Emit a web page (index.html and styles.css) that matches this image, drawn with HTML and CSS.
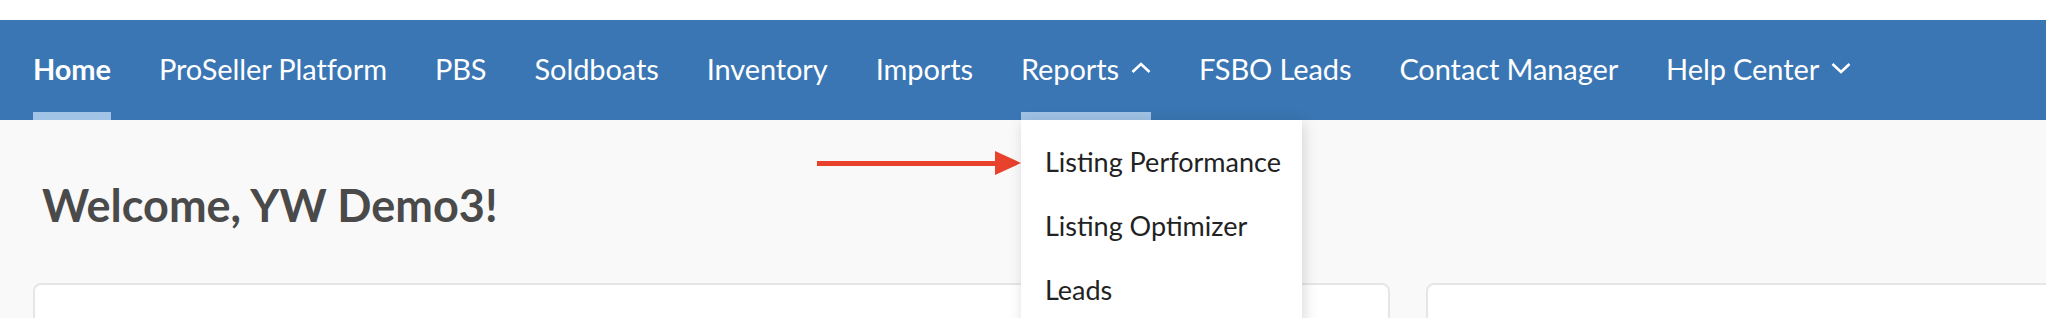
FILE: index.html
```html
<!DOCTYPE html>
<html lang="en">
<head>
    <meta charset="UTF-8">
    <meta name="viewport" content="width=device-width, initial-scale=1.0">
    <title>Dashboard</title>
    <link rel="stylesheet" href="styles.css">
</head>
<body>

    <!-- Top strip + main navigation -->
    <header class="top">
        <nav class="main-nav">
            <a class="nav-item active" href="#">Home</a>
            <a class="nav-item" href="#">ProSeller Platform</a>
            <a class="nav-item" href="#">PBS</a>
            <a class="nav-item" href="#">Soldboats</a>
            <a class="nav-item" href="#">Inventory</a>
            <a class="nav-item" href="#">Imports</a>
            <div class="nav-item has-menu open">
                <span>Reports</span>
                <svg class="chevron" width="20" height="12" viewBox="0 0 20 12">
                    <polyline points="1.5,10 10,2 18.5,10" fill="none" stroke="#fff" stroke-width="2.6"/>
                </svg>
                <ul class="dropdown">
                    <li>Listing Performance</li>
                    <li>Listing Optimizer</li>
                    <li>Leads</li>
                </ul>
            </div>
            <a class="nav-item" href="#">FSBO Leads</a>
            <a class="nav-item" href="#">Contact Manager</a>
            <div class="nav-item has-menu">
                <span>Help Center</span>
                <svg class="chevron" width="20" height="12" viewBox="0 0 20 12">
                    <polyline points="1.5,2 10,10 18.5,2" fill="none" stroke="#fff" stroke-width="2.6"/>
                </svg>
            </div>
        </nav>
    </header>

    <main class="content">
        <h1 class="welcome">Welcome, YW Demo3!</h1>
        <div class="cards">
            <section class="card"></section>
            <section class="card"></section>
        </div>
    </main>

    <!-- annotation arrow pointing at the menu entry -->
    <svg class="pointer" width="204" height="24" viewBox="0 0 204 24">
        <rect x="0" y="10" width="180" height="5" fill="#e8412c"/>
        <polygon points="178,0 204,12 178,24" fill="#e8412c"/>
    </svg>

</body>
</html>
```

FILE: styles.css
```css
/* page */
body {
    margin: 0;
    font-family: Lato, "Open Sans", sans-serif;
    background-color: #f9f9f9;
    overflow: hidden;
}

.top {
    background-color: #fff;
    padding-top: 20px;
}

/* navigation */
.main-nav {
    display: flex;
    gap: 48px;
    height: 100px;
    padding-left: 33px;
    background-color: #3a76b4;
}

.nav-item {
    position: relative;
    display: flex;
    align-items: center;
    gap: 12px;
    padding-bottom: 4px;
    color: #fff;
    font-size: 29px;
    letter-spacing: -0.1px;
    text-decoration: none;
    white-space: nowrap;
}

.nav-item.active {
    font-weight: 700;
    box-shadow: inset 0 -8px 0 #a0c3e6;
}

.nav-item.open {
    box-shadow: inset 0 -8px 0 #a0c3e6;
}

.chevron {
    display: block;
}

.dropdown {
    position: absolute;
    top: 100px;
    left: 0;
    z-index: 2;
    width: 281px;
    margin: 0;
    padding: 10px 0 40px;
    list-style: none;
    background-color: #fff;
    box-shadow: 2px 2px 14px rgba(0, 0, 0, 0.15);
}

.dropdown li {
    padding-left: 24px;
    line-height: 64px;
    font-size: 27px;
    letter-spacing: 0;
    color: #222;
}

/* content */
.content {
    padding: 58px 0 0 33px;
}

.welcome {
    margin: 0 0 51px 9px;
    font-size: 45px;
    line-height: 54px;
    font-weight: 700;
    color: #4a4a4a;
}

.cards {
    display: grid;
    grid-template-columns: 1357px 1357px;
    gap: 36px;
}

.card {
    height: 120px;
    background-color: #fff;
    border: 2px solid #e6e6e6;
    border-radius: 8px;
}

.pointer {
    position: absolute;
    left: 817px;
    top: 151px;
}
```
